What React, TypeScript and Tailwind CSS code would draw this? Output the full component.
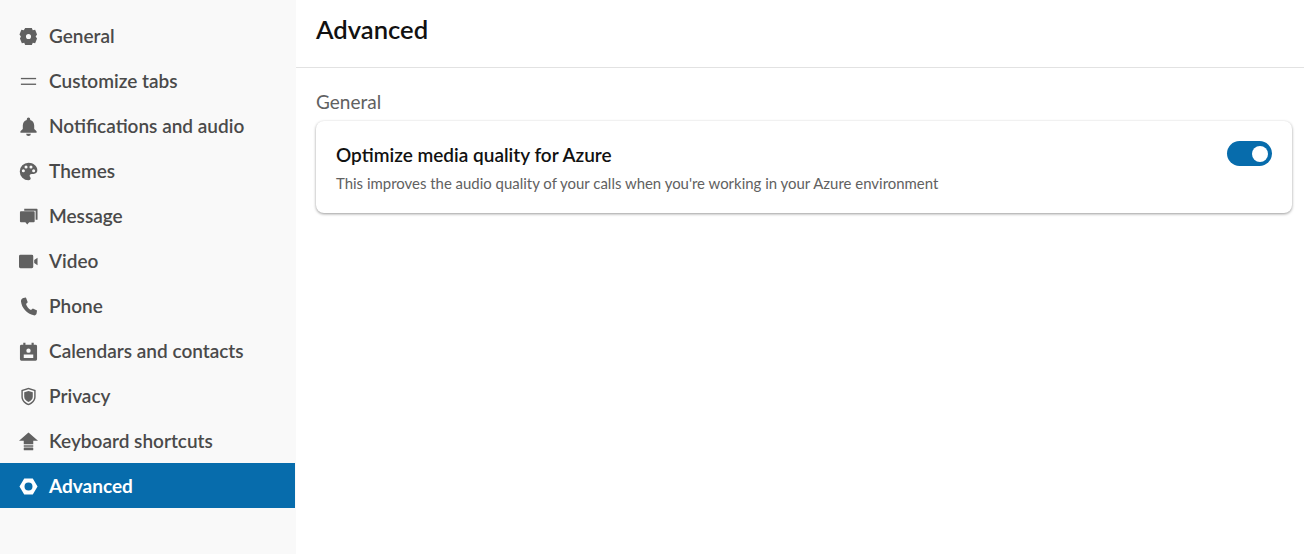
import type { ReactNode } from "react";

function Icon({ children }: { children: ReactNode }) {
  return (
    <svg viewBox="0 0 20 20" className="block w-[19px] h-[19px] shrink-0" fill="currentColor">
      {children}
    </svg>
  );
}

const menu = [
  {
    label: "General",
    icon: (
      <path
        fillRule="evenodd"
        d="M6.500 1h7l1 2.300 2.500-.3 2 5-1.500 2 1.500 2-2 5-2.500-.3-1 2.300h-7l-1-2.300-2.500.3-2-5L2 10 .5 8l2-5 2.500.3zM10 7.300a2.700 2.700 0 1 0 0 5.400 2.700 2.700 0 0 0 0-5.400z"
      />
    ),
  },
  {
    label: "Customize tabs",
    icon: (
      <>
        <rect x="2" y="6.200" width="16" height="1.400" />
        <rect x="2" y="12.200" width="16" height="1.400" />
      </>
    ),
  },
  {
    label: "Notifications and audio",
    icon: (
      <path d="M10 .5a1.800 1.800 0 0 1 1.800 1.800v.8c2.800.7 4.200 3 4.200 5.900v3.500l2.500 2.500v1.500h-17V15L4 12.500V9c0-2.900 1.400-5.200 4.200-5.900v-.8A1.800 1.800 0 0 1 10 .5zM7.500 17.500h5a2.500 2.500 0 0 1-5 0z" />
    ),
  },
  {
    label: "Themes",
    icon: (
      <path
        fillRule="evenodd"
        d="M10 .8a9.200 9.200 0 0 0 0 18.400c1.400 0 2.300-1 2.300-2.100 0-.5-.2-1-.6-1.400-.3-.4-.5-.8-.5-1.300 0-1.100.9-1.900 2-1.900h2.100a4 4 0 0 0 4-4C19.300 4.200 15.100.8 10 .8zM4.600 10.800a1.600 1.600 0 1 1 0-3.200 1.600 1.600 0 0 1 0 3.200zm2.800-3.900a1.600 1.600 0 1 1 0-3.200 1.600 1.600 0 0 1 0 3.200zm5.200 0a1.600 1.600 0 1 1 0-3.200 1.600 1.600 0 0 1 0 3.200zm2.800 3.900a1.600 1.600 0 1 1 0-3.200 1.600 1.600 0 0 1 0 3.200z"
      />
    ),
  },
  {
    label: "Message",
    icon: (
      <>
        <path d="M5.500 1.800h13.300a.7.7 0 0 1 .7.7v11h-2V4H5.500z" />
        <path d="M1 5.500a1 1 0 0 1 1-1h13.500a1 1 0 0 1 1 1v9.500a1 1 0 0 1-1 1h-4.800l-2 2.500-2-2.500H2a1 1 0 0 1-1-1z" />
      </>
    ),
  },
  {
    label: "Video",
    icon: (
      <path d="M1.500 3h12A1.500 1.500 0 0 1 15 4.500v11a1.500 1.500 0 0 1-1.500 1.500h-12A1.500 1.500 0 0 1 0 15.500v-11A1.500 1.500 0 0 1 1.500 3zM16 8.500l3.500-2.500v8L16 11.500z" />
    ),
  },
  {
    label: "Phone",
    icon: (
      <path d="M4.500 1l2.800-.5 1.900 5-1.800 1.900c.7 2.700 2.600 5 5.200 6.300l2-1.700 4.400 2.300-.5 3.100c-.3 1.300-1.500 2.200-2.900 1.900C8.500 17.700 2.800 11.400 2.100 4.700 1.900 2.900 3 1.400 4.500 1z" />
    ),
  },
  {
    label: "Calendars and contacts",
    icon: (
      <path
        fillRule="evenodd"
        d="M4.500 .8h2.300v2.200h6.400V.8h2.300V3h2A1.500 1.500 0 0 1 19 4.500v13.700a1.500 1.500 0 0 1-1.500 1.500h-15A1.500 1.500 0 0 1 1 18.200V4.500A1.500 1.500 0 0 1 2.500 3h2zM10 6.800a2.300 2.300 0 1 0 0 4.600 2.300 2.300 0 0 0 0-4.600zm-5 10h10v-3.600H5z"
      />
    ),
  },
  {
    label: "Privacy",
    icon: (
      <path
        fillRule="evenodd"
        d="M10 .8l7.500 2.400v7c0 4-3.200 7.500-7.500 9-4.300-1.500-7.500-5-7.500-9v-7zm0 1.600L4 4.300v5.900c0 3.200 2.500 6 6 7.300 3.500-1.300 6-4.100 6-7.300V4.300zM10 4.200l4.500 1.400v4.700c0 2.400-1.900 4.500-4.500 5.600-2.600-1.100-4.500-3.200-4.500-5.600V5.600z"
      />
    ),
  },
  {
    label: "Keyboard shortcuts",
    icon: (
      <>
        <path d="M10 .5l10 8.700h-5v3.800H5V9.200H0z" />
        <rect x="5" y="14" width="10" height="1.500" />
        <rect x="5" y="16.300" width="10" height="3" rx="0.600" />
      </>
    ),
  },
  {
    label: "Advanced",
    active: true,
    icon: (
      <path
        fillRule="evenodd"
        d="M5.500 1.500h9L19.500 10l-5 8.500h-9L.5 10zM10 5.800a4.200 4.200 0 1 0 0 8.400 4.200 4.200 0 0 0 0-8.400z"
      />
    ),
  },
];

export default function App() {
  return (
    <div className="flex h-[554px] w-[1304px] bg-white overflow-hidden font-['Lato','Open_Sans',sans-serif]">
      {/* Sidebar */}
      <aside className="w-[296px] shrink-0 bg-[#f9f9f9] pt-[13px]">
        {menu.map((item) => (
          <div
            key={item.label}
            className={
              item.active
                ? "flex items-center gap-[11px] h-[45px] w-[295px] pl-[19px] pt-[2px] bg-[#076cac] text-white text-[19px] font-bold"
                : "flex items-center gap-[11px] h-[45px] w-[295px] pl-[19px] pt-[2px] text-[#4a4a4a] text-[19px] font-semibold"
            }
          >
            <span className={item.active ? "text-white" : "text-[#616161]"}>
              <Icon>{item.icon}</Icon>
            </span>
            <span>{item.label}</span>
          </div>
        ))}
      </aside>

      {/* Main */}
      <main className="flex-1">
        <header className="h-[68px] border-b border-[#e2e2e2] px-[20px] pt-[11px]">
          <h1 className="text-[25.6px] leading-[36px] font-semibold text-[#111111]">Advanced</h1>
        </header>
        <div className="pl-[20px] pr-[12px] pt-[22px]">
          <h2 className="text-[19px] leading-[24px] text-[#616161] mb-[7px]">General</h2>
          <div className="flex items-start justify-between h-[92px] rounded-lg bg-white shadow-[0_1px_3px_rgba(0,0,0,0.4)] px-[20px] pt-[20px]">
            <div>
              <div className="text-[19px] leading-[28px] font-semibold text-[#111111]">
                Optimize media quality for Azure
              </div>
              <p className="text-[14.95px] leading-[20px] mt-[4px] text-[#616161]">
                This improves the audio quality of your calls when you're working in your Azure environment
              </p>
            </div>
            <div className="flex items-center justify-end w-[45px] h-[25px] rounded-full bg-[#076cac] pr-[4px]">
              <div className="w-[16px] h-[16px] rounded-full bg-white" />
            </div>
          </div>
        </div>
      </main>
    </div>
  );
}
